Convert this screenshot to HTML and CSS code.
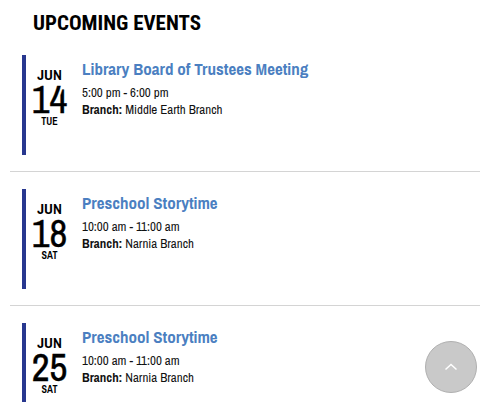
FILE: index.html
```html
<!DOCTYPE html>
<html>
<head>
<meta charset="utf-8">
<link rel="stylesheet" href="styles.css">
</head>
<body>
<div class="wrap">
  <h2 class="heading">UPCOMING EVENTS</h2>
  <div class="event">
    <div class="event-inner">
      <div class="date">
        <div class="month">JUN</div>
        <div class="day">14</div>
        <div class="dow">TUE</div>
      </div>
      <div class="info">
        <a class="title" href="#">Library Board of Trustees Meeting</a>
        <div class="time">5:00 pm - 6:00 pm</div>
        <div class="branch"><b>Branch:</b> Middle Earth Branch</div>
      </div>
    </div>
  </div>
  <div class="event">
    <div class="event-inner">
      <div class="date">
        <div class="month">JUN</div>
        <div class="day">18</div>
        <div class="dow">SAT</div>
      </div>
      <div class="info">
        <a class="title" href="#">Preschool Storytime</a>
        <div class="time">10:00 am - 11:00 am</div>
        <div class="branch"><b>Branch:</b> Narnia Branch</div>
      </div>
    </div>
  </div>
  <div class="event">
    <div class="event-inner">
      <div class="date">
        <div class="month">JUN</div>
        <div class="day">25</div>
        <div class="dow">SAT</div>
      </div>
      <div class="info">
        <a class="title" href="#">Preschool Storytime</a>
        <div class="time">10:00 am - 11:00 am</div>
        <div class="branch"><b>Branch:</b> Narnia Branch</div>
      </div>
    </div>
  </div>
</div>
<a class="to-top" href="#" aria-label="Back to top">
  <svg width="14" height="10" viewBox="0 0 14 10"><path d="M1.5 7.5 L7 2.5 L12.5 7.5" fill="none" stroke="#fff" stroke-width="1.5"/></svg>
</a>
</body>
</html>
```
FILE: styles.css
```css
html, body {
  margin: 0;
  padding: 0;
  background: #fff;
}
body {
  font-family: "Archivo Narrow", "Roboto Condensed", "Liberation Sans", sans-serif;
  color: #111;
  width: 489px;
  height: 402px;
  overflow: hidden;
  position: relative;
}
.wrap {
  padding: 0 9px 0 10px;
}
.heading {
  margin: 0;
  padding: 10px 0 0 23px;
  font-family: "Roboto Condensed", "Archivo Narrow", sans-serif;
  font-size: 21px;
  line-height: 26px;
  font-weight: bold;
  color: #000;
}
.event {
  padding: 17px 0 16px 12px;
  border-bottom: 1px solid #d4d4d4;
}
.heading + .event {
  padding-top: 19px;
}
.event-inner {
  display: flex;
  border-left: 4px solid #28378f;
  height: 100px;
}
.date {
  width: 47px;
  display: flex;
  flex-direction: column;
  align-items: center;
  padding-top: 12px;
  color: #000;
}
.month {
  font-size: 15px;
  line-height: 16px;
  font-weight: bold;
}
.day {
  font-size: 39px;
  line-height: 34px;
  margin-top: -1px;
  font-weight: normal;
  -webkit-text-stroke: 0.4px #000;
}
.dow {
  font-size: 10px;
  line-height: 12px;
  font-weight: bold;
}
.info {
  padding-left: 9px;
  padding-top: 3px;
}
.title {
  display: block;
  color: #4b7fc1;
  text-decoration: none;
  font-size: 17px;
  line-height: 22px;
  font-weight: bold;
  margin-bottom: 4px;
}
.time, .branch {
  font-size: 13px;
  line-height: 17px;
  color: #111;
}
.to-top {
  position: absolute;
  left: 425px;
  top: 341px;
  width: 50px;
  height: 50px;
  border-radius: 50%;
  background: #c9c9c9;
  border: 1px solid #b0b0b0;
  display: flex;
  align-items: center;
  justify-content: center;
}
```
